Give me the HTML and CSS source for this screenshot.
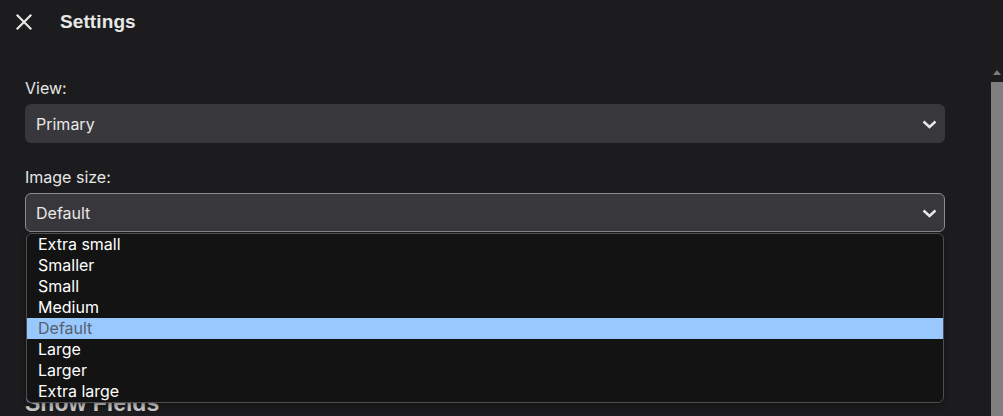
FILE: index.html
```html
<!DOCTYPE html>
<html>
<head>
<meta charset="utf-8">
<link rel="stylesheet" href="styles.css">
</head>
<body>
<div class="app">
  <header class="header">
    <button class="close" aria-label="Close">
      <svg width="16" height="16" viewBox="0 0 16 16"><path d="M1.5 1.5 L14.5 14.5 M14.5 1.5 L1.5 14.5" stroke="#e6e6e6" stroke-width="2.2" stroke-linecap="square" fill="none"/></svg>
    </button>
    <h1 class="title">Settings</h1>
  </header>
  <div class="body">
    <main class="content">
      <div class="field">
        <label class="label">View:</label>
        <div class="select">
          <span>Primary</span>
          <svg class="chev" width="15" height="9" viewBox="0 0 15 9"><path d="M1.5 1.5 L7.5 7 L13.5 1.5" stroke="#e8e8e8" stroke-width="2.4" fill="none"/></svg>
        </div>
      </div>
      <div class="field field-open">
        <label class="label">Image size:</label>
        <div class="select select-focus">
          <span>Default</span>
          <svg class="chev" width="15" height="9" viewBox="0 0 15 9"><path d="M1.5 1.5 L7.5 7 L13.5 1.5" stroke="#e8e8e8" stroke-width="2.4" fill="none"/></svg>
        </div>
        <ul class="dropdown">
          <li>Extra small</li>
          <li>Smaller</li>
          <li>Small</li>
          <li>Medium</li>
          <li class="selected">Default</li>
          <li>Large</li>
          <li>Larger</li>
          <li>Extra large</li>
        </ul>
      </div>
      <h2 class="section">Show Fields</h2>
    </main>
    <div class="scrollbar">
      <div class="arrow"></div>
      <div class="thumb"></div>
    </div>
  </div>
</div>
</body>
</html>
```

FILE: styles.css
```css
* { box-sizing: border-box; }
html, body { margin: 0; padding: 0; }
body {
  background: #1c1c1e;
  color: #e6e6e6;
  font-family: Inter, "Noto Sans", sans-serif;
  width: 1003px;
  height: 416px;
  overflow: hidden;
}
.app { display: flex; flex-direction: column; height: 416px; }
.header {
  display: flex;
  align-items: center;
  height: 44px;
  padding-left: 16px;
  flex: none;
}
.close {
  background: none;
  border: 0;
  padding: 0;
  width: 16px;
  height: 16px;
  display: flex;
  margin-top: -1px;
}
.title {
  margin: 0 0 0 28px;
  font-family: "Liberation Sans", Arial, sans-serif;
  font-weight: bold;
  font-size: 19px;
  color: #e8e8e8;
  letter-spacing: 0.1px;
}
.body { display: flex; flex: 1; min-height: 0; }
.content {
  flex: 1;
  padding: 34px 46px 0 25px;
}
.field { display: flex; flex-direction: column; }
.field + .field { margin-top: 24px; }
.field-open { position: relative; }
.label {
  font-size: 16px;
  line-height: 20px;
  color: #e6e6e6;
  margin-bottom: 6px;
}
.select {
  height: 39px;
  background: #38373c;
  border-radius: 6px;
  display: flex;
  align-items: center;
  justify-content: space-between;
  padding: 0 8px 0 11px;
  font-size: 16px;
  color: #e8e8e8;
}
.select-focus { border: 1px solid #8b8b8e; padding-left: 10px; padding-right: 7px; }
.chev { margin-top: 1px; }
.dropdown {
  position: absolute;
  left: 1px;
  right: 1px;
  top: 66px;
  margin: 0;
  padding: 0;
  list-style: none;
  background: #131313;
  border: 1px solid #4d4d4f;
  border-radius: 6px;
  overflow: hidden;
  box-shadow: 0 2px 6px rgba(0,0,0,0.4);
  z-index: 2;
}
.dropdown li {
  height: 21px;
  line-height: 21px;
  padding-left: 11px;
  font-size: 16px;
  color: #ffffff;
}
.dropdown li.selected {
  background: #99c8ff;
  color: #56606c;
}
.section {
  margin: 158px 0 0 0;
  font-family: "Liberation Sans", Arial, sans-serif;
  font-size: 23px;
  line-height: 26px;
  font-weight: bold;
  color: #c8c8c8;
}
.scrollbar {
  width: 12px;
  flex: none;
  display: flex;
  flex-direction: column;
  align-items: center;
  padding-top: 26px;
}
.arrow {
  width: 0; height: 0;
  border-left: 4px solid transparent;
  border-right: 4px solid transparent;
  border-bottom: 5px solid #7c7c7c;
}
.thumb {
  margin-top: 7px;
  width: 12px;
  flex: 1;
  background: #7f7f7f;
}
```
